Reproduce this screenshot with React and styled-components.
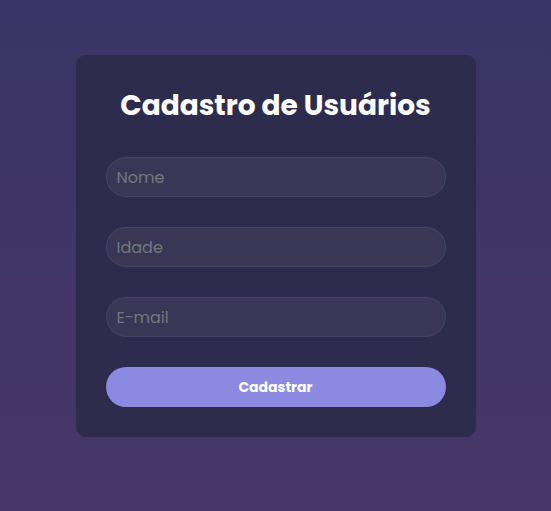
import React from "react";
import styled, { createGlobalStyle } from "styled-components";

const GlobalStyle = createGlobalStyle`
    * {
        box-sizing: border-box;
    }

    html,
    body {
        margin: 0;
        min-height: 100%;
    }

    body {
        background: linear-gradient(180deg, #3a3566 0%, #463768 100%);
        min-height: 511px;
        font-family: Poppins, "DejaVu Sans", sans-serif;
        color: #ffffff;
    }
`;

const Page = styled.div`
    display: flex;
    justify-content: center;
    padding-top: 55px;
    min-height: 511px;
`;

const Card = styled.form`
    width: 400px;
    height: 382px;
    background: #2e2c4d;
    border-radius: 10px;
    padding: 30px;
    display: flex;
    flex-direction: column;
    gap: 30px;
`;

const Title = styled.h1`
    margin: 0;
    font-size: 28px;
    line-height: 42px;
    font-weight: 700;
    text-align: center;
`;

const Field = styled.input`
    height: 40px;
    width: 100%;
    border-radius: 20px;
    border: 1px solid #46446b;
    background: #393755;
    padding: 0 10px;
    font-family: inherit;
    font-size: 16px;
    color: #ffffff;
    outline: none;

    &::placeholder {
        color: #74777a;
    }
`;

const Submit = styled.button`
    height: 40px;
    width: 100%;
    border: none;
    border-radius: 20px;
    background: #8b89e0;
    color: #ffffff;
    font-family: inherit;
    font-size: 14px;
    font-weight: 700;
    cursor: pointer;
`;

const App = () => (
    <>
        <GlobalStyle />
        <Page>
            <Card onSubmit={(e) => e.preventDefault()}>
                <Title>Cadastro de Usuários</Title>
                <Field type="text" placeholder="Nome" />
                <Field type="number" placeholder="Idade" />
                <Field type="email" placeholder="E-mail" />
                <Submit type="submit">Cadastrar</Submit>
            </Card>
        </Page>
    </>
);

export default App;
